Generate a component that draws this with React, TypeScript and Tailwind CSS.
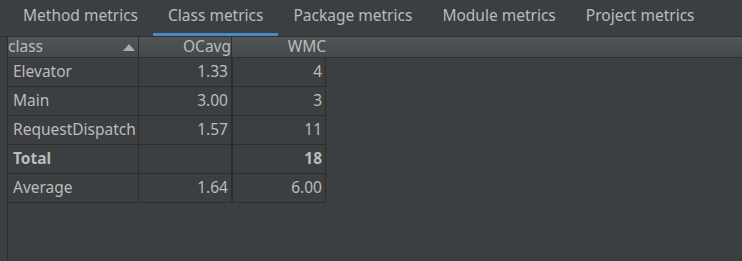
import React from "react";

const tabs = ["Method metrics", "Class metrics", "Package metrics", "Module metrics", "Project metrics"];

const rows: { name: string; oc: string; wmc: string; bold?: boolean }[] = [
  { name: "Elevator", oc: "1.33", wmc: "4" },
  { name: "Main", oc: "3.00", wmc: "3" },
  { name: "RequestDispatch", oc: "1.57", wmc: "11" },
  { name: "Total", oc: "", wmc: "18", bold: true },
  { name: "Average", oc: "1.64", wmc: "6.00" },
];

export default function App() {
  return (
    <div
      className="w-[742px] h-[261px] bg-[#3c3f41] text-[#bbbbbb] text-[15.5px] flex flex-col overflow-hidden"
      style={{ fontFamily: '"Noto Sans", "Open Sans", sans-serif' }}
    >
      <div className="flex h-[37px] pl-[8px] border-b border-[#2b2d2f] shrink-0 text-[15.5px]">
        {tabs.map((t, i) => (
          <div
            key={t}
            className={
              i === 1
                ? "h-[36px] px-[15px] flex items-center border-b-[3px] border-[#4a88c7] pb-[1px] whitespace-nowrap"
                : "h-[36px] px-[15px] flex items-center border-b-[3px] border-transparent pb-[1px] whitespace-nowrap"
            }
          >
            {t}
          </div>
        ))}
      </div>
      <div className="flex-1 ml-[7px] border-l border-[#2b2d2f] flex flex-col">
        <div className="h-[21px] flex bg-gradient-to-b from-[#515457] to-[#46494b] border-b border-[#2b2d2f] shrink-0">
          <div className="w-[131px] border-r border-[#2e3032] flex items-center justify-between pr-[3px] leading-none">
            <span>class</span>
            <svg width="12" height="7" viewBox="0 0 12 7">
              <polygon points="0,7 6,0 12,7" fill="#a9abad" />
            </svg>
          </div>
          <div className="w-[93px] border-r border-[#2e3032] flex items-center justify-end leading-none">
            OCavg
          </div>
          <div className="w-[94px] flex items-center justify-end leading-none">WMC</div>
          <div className="flex-1" />
        </div>
        <div className="w-[318px] border-r border-[#2b2d2f]">
          {rows.map((r) => (
            <div
              key={r.name}
              className={
                r.bold
                  ? "flex h-[29px] border-b border-[#2b2d2f] font-bold"
                  : "flex h-[29px] border-b border-[#2b2d2f]"
              }
            >
              <div className="w-[131px] border-r border-[#2b2d2f] flex items-center pl-[5px] whitespace-nowrap">
                {r.name}
              </div>
              <div className="w-[94px] border-r-2 border-[#2b2d2f] flex items-center justify-end pr-[3px]">
                {r.oc}
              </div>
              <div className="flex-1 flex items-center justify-end pr-[3px]">{r.wmc}</div>
            </div>
          ))}
        </div>
      </div>
    </div>
  );
}
